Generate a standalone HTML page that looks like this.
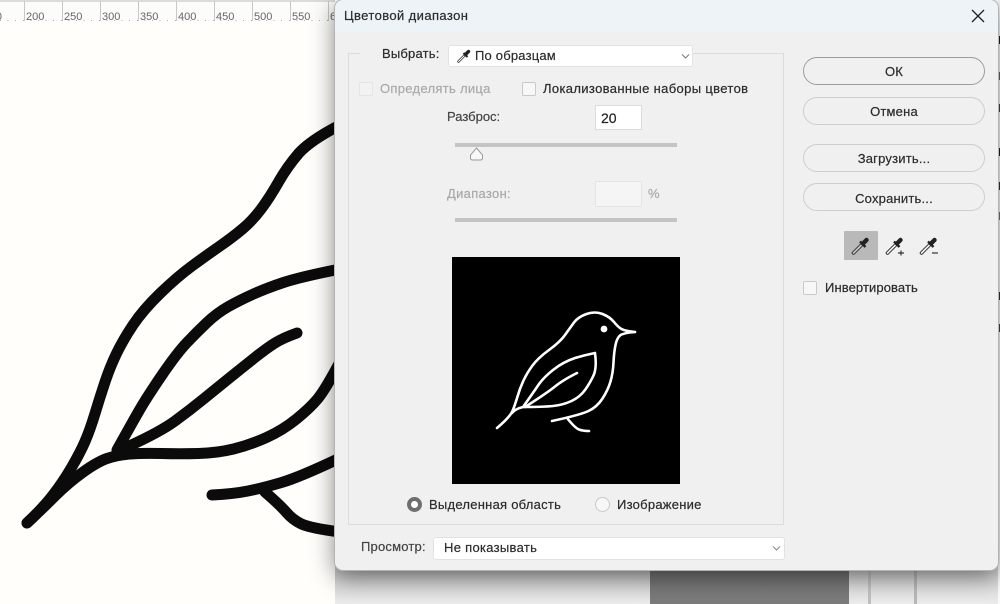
<!DOCTYPE html>
<html lang="ru"><head><meta charset="utf-8"><title>Цветовой диапазон</title>
<style>
html,body{margin:0;padding:0;width:1000px;height:604px;overflow:hidden;background:#fffefb}
body{position:relative;font-family:"Liberation Sans",sans-serif;font-size:13px;color:#2b2b2b}
.a{position:absolute;white-space:nowrap;line-height:16px;-webkit-text-stroke:.2px currentColor}
.r{position:absolute;top:12px;font-size:11px;line-height:11px;color:#666;width:32px}
.t{position:absolute;top:1px;height:20px;width:1px;background:#c8c8c8}
.btn{position:absolute;left:803px;width:180px;height:26px;border:1px solid #cdcdcd;border-radius:14px;text-align:center;line-height:28px;letter-spacing:.2px;-webkit-text-stroke:.2px currentColor}
.cb{position:absolute;width:12px;height:12px;border:1px solid #c9c9c9;border-radius:2px;background:#f7f7f7}
.sel{position:absolute;background:#fff;border:1px solid #e2e2e2;border-radius:3px;box-sizing:border-box}
.bar{position:absolute;left:455px;width:222px;height:4px;background:#c4c4c4}
</style></head><body>

<div style="position:absolute;left:0;top:0;width:335px;height:21px;background:#fcfcfb"></div>
<div style="position:absolute;left:0;top:0;width:335px;height:2px;background:#dcdcdc"></div>
<div style="position:absolute;left:0;top:20px;width:335px;height:1px;background-image:repeating-linear-gradient(90deg,#aaa 0 1px,transparent 1px 7.6px)"></div>
<div class="t" style="left:24px"></div><div class="t" style="left:62px"></div><div class="t" style="left:100px"></div><div class="t" style="left:138px"></div><div class="t" style="left:176px"></div><div class="t" style="left:214px"></div><div class="t" style="left:252px"></div><div class="t" style="left:290px"></div><div class="t" style="left:328px"></div>
<div class="r" style="left:-6px;width:8px;overflow:hidden;direction:rtl">0</div>
<div class="r" style="left:26px">200</div><div class="r" style="left:64px">250</div><div class="r" style="left:102px">300</div><div class="r" style="left:140px">350</div><div class="r" style="left:178px">400</div><div class="r" style="left:216px">450</div><div class="r" style="left:254px">500</div><div class="r" style="left:292px">550</div><div class="r" style="left:330px">600</div>

<svg style="position:absolute;left:0;top:0" width="340" height="604" viewBox="0 0 340 604" fill="none" stroke="#0b0b0b" stroke-width="11" stroke-linecap="round" stroke-linejoin="round">
<path d="M27 523Q43 508 53 495Q63 482 71.500 467.500Q80 453 85 441.500Q90 430 95 413.500Q100 397 105 382Q110 367 116.500 353.500Q123 340 133 325Q143 310 160 293.500Q177 277 192 266Q207 255 220 246Q233 237 243 228.500Q253 220 261.500 208.500Q270 197 278.500 182Q287 167 299 153Q311 140 340 125"/>
<path d="M117 450Q132 423 139.500 410Q147 397 162 375Q177 353 187 342.500Q197 332 207 322.500Q217 313 228.500 306.500Q240 300 253.500 294Q267 288 283.500 282.500Q300 277 340 269"/>
<path d="M127 447Q160 432 175 421Q190 410 203.500 399Q217 388 230 377.500Q243 367 255 357.500Q267 348 275 343Q283 338 297 333"/>
<path d="M27 523Q43 508 55.500 495.500Q68 483 82.500 472.500Q97 462 107 458.500Q117 455 130 454Q143 453 161.500 453.500Q180 454 198.500 453.500Q217 453 233.500 449Q250 445 266.500 437.500Q283 430 296.500 419Q310 408 317.500 399Q325 390 340 362"/>
<path d="M212 495Q233 494 248 491Q263 488 281.500 482.500Q300 477 340 458"/>
<path d="M265 492Q280 505 286.500 512.500Q293 520 301.500 524Q310 528 340 532"/>
</svg>

<div style="position:absolute;left:335px;top:560px;width:315px;height:44px;background:linear-gradient(#c4c4c4,#c4c4c4 25%,#ececec)"></div>
<div style="position:absolute;left:650px;top:560px;width:199px;height:44px;background:linear-gradient(#707070,#7c7c7c)"></div>
<div style="position:absolute;left:849px;top:560px;width:151px;height:44px;background:linear-gradient(#cfcfcf,#cfcfcf 25%,#ececec)"></div>
<div style="position:absolute;left:868px;top:560px;width:3px;height:44px;background:#c0c0c0"></div>
<div style="position:absolute;left:914px;top:560px;width:3px;height:44px;background:#b8b8b8"></div>

<div style="position:absolute;left:998px;top:0;width:2px;height:604px;background:#fafafa"></div>
<div style="position:absolute;left:998px;top:36px;width:2px;height:8px;background:#222"></div>
<div style="position:absolute;left:998px;top:72px;width:2px;height:8px;background:#666"></div>
<div style="position:absolute;left:998px;top:104px;width:2px;height:8px;background:#444"></div>
<div style="position:absolute;left:998px;top:148px;width:2px;height:8px;background:#222"></div>
<div style="position:absolute;left:998px;top:182px;width:2px;height:8px;background:#333"></div>
<div style="position:absolute;left:998px;top:212px;width:2px;height:8px;background:#777"></div>
<div style="position:absolute;left:998px;top:292px;width:2px;height:8px;background:#333"></div>
<div style="position:absolute;left:998px;top:324px;width:2px;height:8px;background:#444"></div>

<div style="position:absolute;left:335px;top:0;width:663px;height:570px;background:#f0f0f0;border-radius:8px;box-shadow:0 0 0 1px #b4b4b4,0 6px 24px rgba(0,0,0,.5);">
<div style="position:absolute;left:0;top:0;width:663px;height:32px;background:#eef3f7;border-radius:8px 8px 0 0"></div>
</div>

<div class="a" style="left:344px;top:8px;letter-spacing:.4px">Цветовой диапазон</div>
<svg style="position:absolute;left:971px;top:9px" width="14" height="14" viewBox="0 0 14 14"><path d="M1 1L13 13M13 1L1 13" stroke="#222" stroke-width="1.300" fill="none"/></svg>

<div style="position:absolute;left:348px;top:53px;width:434px;height:470px;border:1px solid #dcdcdc;box-sizing:content-box"></div>
<div style="position:absolute;left:360px;top:50px;width:333px;height:6px;background:#f0f0f0"></div>

<div class="a" style="left:382px;top:46px;letter-spacing:.2px">Выбрать:</div>
<div class="sel" style="left:448px;top:45px;width:245px;height:22px"></div>
<svg style="position:absolute;left:456px;top:49px" width="16" height="15" viewBox="0 0 16 15" fill="none"><path d="M2.500 12.500L9 6" stroke="#333" stroke-width="2.600" stroke-linecap="round"/><path d="M2.500 12.500L9 6" stroke="#fff" stroke-width="1" stroke-linecap="round"/><path d="M7.500 4L11.500 8" stroke="#222" stroke-width="2"/><path d="M9.500 5.500L12.500 2.500" stroke="#222" stroke-width="3.400" stroke-linecap="round"/></svg>
<div class="a" style="left:475px;top:48px;letter-spacing:.2px">По образцам</div>
<svg style="position:absolute;left:681px;top:53px" width="9" height="7" viewBox="0 0 9 7"><path d="M1 1.500L4.500 5L8 1.500" stroke="#777" fill="none"/></svg>

<div class="cb" style="left:359px;top:82px;background:#f2f2f2;border-color:#e4e4e4"></div>
<div class="a" style="left:380px;top:81px;color:#a9a9a9;letter-spacing:.3px">Определять лица</div>
<div class="cb" style="left:522px;top:82px"></div>
<div class="a" style="left:543px;top:81px;letter-spacing:.35px">Локализованные наборы цветов</div>

<div class="a" style="left:447px;top:109px;color:#444">Разброс:</div>
<div class="sel" style="left:595px;top:105px;width:47px;height:25px;border-radius:0;border-color:#dcdcdc"></div>
<div class="a" style="left:601px;top:110px;color:#222;font-size:14px">20</div>
<div class="bar" style="top:143px"></div>
<svg style="position:absolute;left:469px;top:147px" width="15" height="14" viewBox="0 0 15 14"><path d="M7.500 1L13.500 8V11Q13.500 13 11.500 13H3.500Q1.500 13 1.500 11V8Z" fill="#f8f8f8" stroke="#999"/></svg>

<div class="a" style="left:447px;top:186px;color:#a9a9a9;letter-spacing:.3px">Диапазон:</div>
<div class="sel" style="left:595px;top:181px;width:47px;height:26px;border-radius:0;background:#f5f5f5;border-color:#e4e4e4"></div>
<div class="a" style="left:648px;top:186px;color:#a9a9a9">%</div>
<div class="bar" style="top:218px"></div>

<svg style="position:absolute;left:452px;top:257px;background:#000" width="228" height="227" viewBox="452 257 228 227" fill="none" stroke="#fff" stroke-width="2.600" stroke-linecap="round" stroke-linejoin="round">
<path d="M497 428Q510 417 512.500 411Q515 405 517.500 396.500Q520 388 523.500 380.500Q527 373 532.500 365.500Q538 358 549 350Q560 342 565 335Q570 328 574 322.500Q578 317 586.500 314Q595 311 602.500 314Q610 317 614 322Q618 327 621.500 329Q625 331 635 332"/>
<path d="M635 332Q623 333 620 335.500Q617 338 615.500 345Q614 352 613.500 362.500Q613 373 610.500 381.500Q608 390 602.500 398.500Q597 407 588.500 411Q580 415 552 421"/>
<path d="M523 407Q533 393 538 385.500Q543 378 553 370Q563 362 575 358Q585 355 595 353Q597 368 593.500 375.500Q590 383 585 390Q580 397 571.500 401Q563 405 553 406Q543 407 523 407Q515 409 512 413"/>
<path d="M525 407Q547 393 555 386.500Q563 380 577 373"/>
<path d="M567 418Q575 428 579 429.500Q583 431 589 431"/>
<circle cx="604" cy="329" r="3.400" fill="#fff" stroke="none"/>
</svg>

<div style="position:absolute;left:407px;top:497px;width:15px;height:15px;border-radius:50%;background:#fff;border:4px solid #6e6e6e;box-sizing:border-box"></div>
<div class="a" style="left:429px;top:497px;letter-spacing:.25px">Выделенная область</div>
<div style="position:absolute;left:595px;top:497px;width:15px;height:15px;border-radius:50%;background:#f7f7f7;border:1px solid #c9c9c9;box-sizing:border-box"></div>
<div class="a" style="left:617px;top:497px;letter-spacing:.25px">Изображение</div>

<div class="a" style="left:361px;top:539px;color:#444;letter-spacing:.2px">Просмотр:</div>
<div class="sel" style="left:433px;top:537px;width:352px;height:23px"></div>
<div class="a" style="left:444px;top:540px;letter-spacing:.3px">Не показывать</div>
<svg style="position:absolute;left:772px;top:545px" width="9" height="7" viewBox="0 0 9 7"><path d="M1 1.500L4.500 5L8 1.500" stroke="#888" fill="none"/></svg>

<div class="btn" style="top:57px;border-color:#9d9d9d">ОК</div>
<div class="btn" style="top:97px">Отмена</div>
<div class="btn" style="top:144px">Загрузить...</div>
<div class="btn" style="top:183px;line-height:29px">Сохранить...</div>

<div style="position:absolute;left:844px;top:231px;width:34px;height:29px;background:#b9b9b9;border-radius:1px"></div>
<svg style="position:absolute;left:850px;top:235px" width="22" height="22" viewBox="0 0 22 22" fill="none"><path d="M3.500 18L12 9.500" stroke="#333" stroke-width="3.600" stroke-linecap="round"/><path d="M3.500 18L12 9.500" stroke="#c8c8c8" stroke-width="1.600" stroke-linecap="round"/><path d="M10 6.500L15.500 12" stroke="#222" stroke-width="2.400"/><path d="M13 8.500L16.500 5" stroke="#222" stroke-width="4.400" stroke-linecap="round"/></svg>
<svg style="position:absolute;left:884px;top:235px" width="24" height="22" viewBox="0 0 24 22" fill="none"><path d="M3.500 18L12 9.500" stroke="#333" stroke-width="3.600" stroke-linecap="round"/><path d="M3.500 18L12 9.500" stroke="#f4f4f4" stroke-width="1.600" stroke-linecap="round"/><path d="M10 6.500L15.500 12" stroke="#222" stroke-width="2.400"/><path d="M13 8.500L16.500 5" stroke="#222" stroke-width="4.400" stroke-linecap="round"/><path d="M14 18H20M17 15.500V20.500" stroke="#333" stroke-width="1.200"/></svg>
<svg style="position:absolute;left:918px;top:235px" width="24" height="22" viewBox="0 0 24 22" fill="none"><path d="M3.500 18L12 9.500" stroke="#333" stroke-width="3.600" stroke-linecap="round"/><path d="M3.500 18L12 9.500" stroke="#f4f4f4" stroke-width="1.600" stroke-linecap="round"/><path d="M10 6.500L15.500 12" stroke="#222" stroke-width="2.400"/><path d="M13 8.500L16.500 5" stroke="#222" stroke-width="4.400" stroke-linecap="round"/><path d="M14 18H20" stroke="#333" stroke-width="1.200"/></svg>

<div class="cb" style="left:803px;top:281px"></div>
<div class="a" style="left:825px;top:280px;letter-spacing:.1px">Инвертировать</div>
</body></html>
